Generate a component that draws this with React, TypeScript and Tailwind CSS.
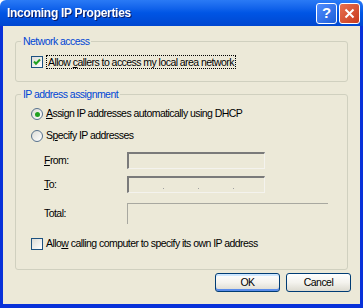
import React from "react"

const font = "font-['Liberation_Sans',Arial,sans-serif]"

const CheckBox = ({ checked }: { checked?: boolean }) => (
	<span className="flex-shrink-0 w-[12px] h-[12px] border border-[#1c5180] bg-gradient-to-br from-[#dcdcd6] to-white flex items-center justify-center">
		{checked && (
			<svg width="8" height="8" viewBox="0 0 8 8">
				<path d="M1 3.5 L3 5.8 L7 1.5" stroke="#21a121" strokeWidth="2" fill="none" />
			</svg>
		)}
	</span>
)

const Radio = ({ checked }: { checked?: boolean }) => (
	<span className="flex-shrink-0 w-[12px] h-[12px] rounded-full border border-[#56718d] bg-gradient-to-br from-[#dcdcd6] to-white flex items-center justify-center">
		{checked && <span className="w-[5px] h-[5px] rounded-full bg-[#21a121]" />}
	</span>
)

const Group = ({ title, children, className }: { title: string; children: React.ReactNode; className?: string }) => (
	<fieldset className={`mx-[12px] border border-[#d0d0bf] rounded-[3px] ${className ?? ""}`}>
		<legend className="ml-[5px] px-[2px] text-[#0046d5] leading-[13px]">{title}</legend>
		{children}
	</fieldset>
)

const XpButton = ({ label, isDefault }: { label: string; isDefault?: boolean }) => (
	<div
		className={`w-[65px] h-[19px] rounded-[3px] border border-[#003c74] bg-gradient-to-b from-white via-[#f4f3ee] to-[#dcdad0] flex items-center justify-center text-black ${
			isDefault ? "shadow-[inset_0_-2px_0_#5a8cea,inset_0_2px_0_#cee7ff]" : ""
		}`}>
		{label}
	</div>
)

const Box = ({ children }: { children?: React.ReactNode }) => (
	<div className="w-[138px] h-[17px] border-t-2 border-l-2 border-t-[#7a7a7a] border-l-[#7a7a7a] border-b border-r border-b-[#f4f3ee] border-r-[#f4f3ee] flex items-end pb-[3px]">
		{children}
	</div>
)

const Row = ({ label, children, className }: { label: React.ReactNode; children: React.ReactNode; className?: string }) => (
	<div className={`flex items-center pl-[13px] ${className ?? ""}`}>
		<span className="w-[83px]">{label}</span>
		{children}
	</div>
)

export default function App() {
	return (
		<div className={`w-[363px] h-[308px] flex flex-col text-[10.5px] tracking-[-0.55px] ${font}`}>
			<div className="h-[26px] flex items-center pl-[7px] pr-[3px] bg-gradient-to-b from-[#2a7af5] via-[#0055e5] to-[#0047d0] rounded-t-[6px]">
				<span className="text-white font-bold text-[12px] tracking-[-0.3px] drop-shadow-[1px_1px_0_#0a1e6a] flex-grow">
					Incoming IP Properties
				</span>
				<div className="w-[21px] h-[21px] rounded-[3px] border border-white bg-gradient-to-br from-[#4f8dff] to-[#1e5ed8] flex items-center justify-center text-white font-bold text-[15px] tracking-[0px]">
					?
				</div>
				<div className="ml-[2px] w-[21px] h-[21px] rounded-[3px] border border-white bg-gradient-to-br from-[#e8704f] to-[#c8391c] flex items-center justify-center">
					<svg width="11" height="11" viewBox="0 0 11 11">
						<path d="M1.5 1.5 L9.5 9.5 M9.5 1.5 L1.5 9.5" stroke="white" strokeWidth="2" />
					</svg>
				</div>
			</div>
			<div className="flex-grow flex flex-col bg-[#ece9d8] border-x-[3px] border-b-[4px] border-[#0831d9] text-black">
				<Group title="Network access" className="mt-[9px] pb-[12px]">
					<div className="flex items-center gap-[3px] pl-[15px] pt-[7px]">
						<CheckBox checked />
						<span className="border border-dotted border-black px-[1px] leading-[12px]">
							Allow <u>c</u>allers to access my local area network
						</span>
					</div>
				</Group>
				<Group title="IP address assignment" className="mt-[6px] pb-[19px]">
					<div className="flex flex-col pl-[15px] pt-[7px]">
						<label className="flex items-center gap-[3px] h-[12px]">
							<Radio checked />
							<span>
								<u>A</u>ssign IP addresses automatically using DHCP
							</span>
						</label>
						<label className="flex items-center gap-[3px] h-[12px] mt-[10px]">
							<Radio />
							<span>
								S<u>p</u>ecify IP addresses
							</span>
						</label>
						<Row label={<><u>F</u>rom:</>} className="mt-[10px]">
							<Box />
						</Row>
						<Row label={<><u>T</u>o:</>} className="mt-[7px]">
							<Box>
								<span className="ml-[34px] w-[1px] h-[1px] bg-[#a0a0a0]" />
								<span className="ml-[34px] w-[1px] h-[1px] bg-[#a0a0a0]" />
								<span className="ml-[34px] w-[1px] h-[1px] bg-[#a0a0a0]" />
							</Box>
						</Row>
						<Row label="Total:" className="mt-[10px]">
							<div className="w-[201px] h-[21px] border-t border-l border-[#a8a8a0]" />
						</Row>
						<label className="flex items-center gap-[3px] h-[12px] mt-[14px]">
							<CheckBox />
							<span>
								Allo<u>w</u> calling computer to specify its own IP address
							</span>
						</label>
					</div>
				</Group>
				<div className="flex justify-end gap-[6px] pr-[9px] mt-auto pb-[12px]">
					<XpButton label="OK" isDefault />
					<XpButton label="Cancel" />
				</div>
			</div>
		</div>
	)
}
